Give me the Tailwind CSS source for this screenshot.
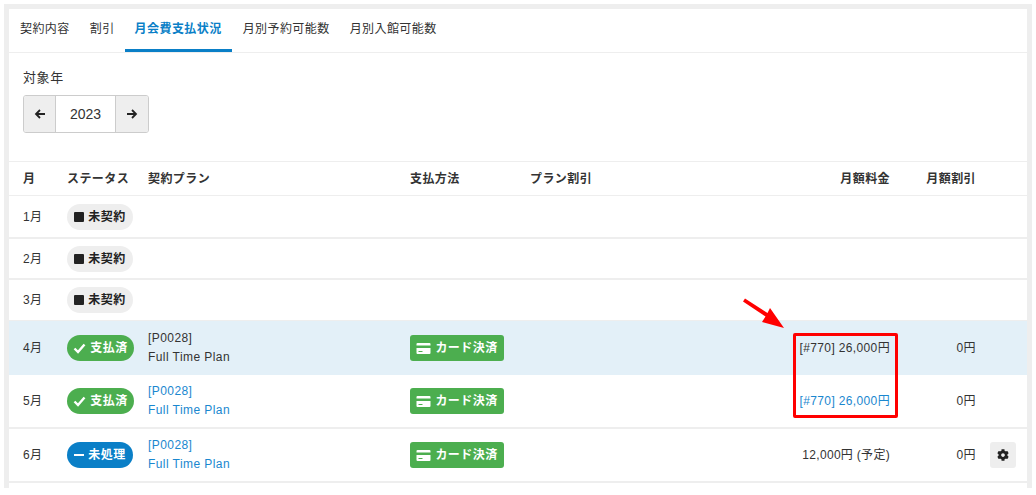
<!DOCTYPE html>
<html lang="ja">
<head>
<meta charset="utf-8">
<script src="https://cdn.jsdelivr.net/npm/@tailwindcss/browser@4"></script>
</head>
<body class="bg-white font-['Liberation_Sans','Noto_Sans_CJK_JP',sans-serif] text-[12px] tracking-[0.43px] text-[#333]">
<div class="relative w-[1036px] h-[495px] overflow-hidden bg-white pt-[4px] pl-[4px]">
  <div class="w-[1028px] h-[484px] overflow-hidden border-[5px] border-b-0 border-[#eeeeee] bg-white">
    <nav class="flex h-[44px] border-b border-[#eeeeee] pl-[1px]">
      <a class="flex h-[43px] items-center px-[10px] pb-[3px]">契約内容</a>
      <a class="flex h-[43px] items-center px-[10px] pb-[3px]">割引</a>
      <a class="flex h-[43px] items-center border-b-[3px] border-[#0a7fc7] px-[10px] font-bold text-[#0a7fc7]">月会費支払状況</a>
      <a class="flex h-[43px] items-center pl-[11px] pr-[10px] pb-[3px]">月別予約可能数</a>
      <a class="flex h-[43px] items-center px-[10px] pb-[3px]">月別入館可能数</a>
    </nav>
    <section class="h-[108px] pl-[14px] pt-[16px]">
      <div class="text-[13px] leading-[18px] tracking-[0.6px]">対象年</div>
      <div class="mt-[8px] flex h-[38px] w-[126px] overflow-hidden rounded-[3px] border border-[#cccccc]">
        <button class="flex w-[31px] items-center justify-center bg-[#eeeeee]">
          <svg width="12" height="12" viewBox="0 0 12 12" fill="none" stroke="#222" stroke-width="1.8"><path d="M11 6H2M6 2 2 6l4 4"/></svg>
        </button>
        <div class="flex w-[61px] items-center justify-center border-x border-[#cccccc] text-[14px] tracking-normal">2023</div>
        <button class="flex w-[32px] items-center justify-center bg-[#eeeeee]">
          <svg width="12" height="12" viewBox="0 0 12 12" fill="none" stroke="#222" stroke-width="1.8"><path d="M1 6h9M6 2l4 4-4 4"/></svg>
        </button>
      </div>
    </section>
    <div class="w-full">
      <div class="grid h-[35px] grid-cols-[58px_81px_262px_120px_250px_110px_86px_1fr] items-center border-y border-[#eeeeee] font-bold">
        <div class="pl-[14px]">月</div><div>ステータス</div><div>契約プラン</div><div>支払方法</div><div>プラン割引</div>
        <div class="text-right">月額料金</div><div class="text-right">月額割引</div><div></div>
      </div>
      <div class="grid h-[43px] grid-cols-[58px_81px_262px_120px_250px_110px_86px_1fr] items-center border-b-2 border-[#eeeeee]">
        <div class="pl-[14px]">1月</div>
        <div><span class="inline-flex h-[26px] w-[66px] items-center justify-center gap-[4px] rounded-full bg-[#eeeeee] font-bold text-[#222]"><i class="size-[10px] rounded-[1px] bg-[#222]"></i>未契約</span></div>
      </div>
      <div class="grid h-[41px] grid-cols-[58px_81px_262px_120px_250px_110px_86px_1fr] items-center border-b-2 border-[#eeeeee]">
        <div class="pl-[14px]">2月</div>
        <div><span class="inline-flex h-[26px] w-[66px] items-center justify-center gap-[4px] rounded-full bg-[#eeeeee] font-bold text-[#222]"><i class="size-[10px] rounded-[1px] bg-[#222]"></i>未契約</span></div>
      </div>
      <div class="grid h-[41px] grid-cols-[58px_81px_262px_120px_250px_110px_86px_1fr] items-center border-b border-[#eeeeee]">
        <div class="pl-[14px]">3月</div>
        <div><span class="inline-flex h-[26px] w-[66px] items-center justify-center gap-[4px] rounded-full bg-[#eeeeee] font-bold text-[#222]"><i class="size-[10px] rounded-[1px] bg-[#222]"></i>未契約</span></div>
      </div>
      <div class="grid h-[54px] grid-cols-[58px_81px_262px_120px_250px_110px_86px_1fr] items-center bg-[#e3f0f8]">
        <div class="pl-[14px]">4月</div>
        <div><span class="inline-flex h-[26px] w-[67px] items-center justify-center gap-[4px] rounded-full bg-[#4cae4f] font-bold text-white"><svg width="13" height="11" viewBox="0 0 13 11" fill="none" stroke="#fff" stroke-width="2.4"><path d="M1.500 5.500 5 9l6.500-7.500"/></svg>支払済</span></div>
        <div class="leading-[19px]">[P0028]<br>Full Time Plan</div>
        <div><span class="inline-flex h-[26px] w-[94px] items-center justify-center gap-[4px] rounded-[3px] bg-[#4cae4f] font-bold text-white"><svg width="15" height="11" viewBox="0 0 14 11" fill="#fff"><path d="M1 0h12a1 1 0 0 1 1 1v1.500H0V1a1 1 0 0 1 1-1ZM0 5h14v5a1 1 0 0 1-1 1H1a1 1 0 0 1-1-1Zm2 3v1h4V8Z"/></svg>カード決済</span></div>
        <div></div>
        <div class="text-right tracking-[0.36px]">[#770] 26,000円</div><div class="text-right">0円</div>
      </div>
      <div class="grid h-[54px] grid-cols-[58px_81px_262px_120px_250px_110px_86px_1fr] items-center border-b-2 border-[#eeeeee]">
        <div class="pl-[14px]">5月</div>
        <div><span class="inline-flex h-[26px] w-[67px] items-center justify-center gap-[4px] rounded-full bg-[#4cae4f] font-bold text-white"><svg width="13" height="11" viewBox="0 0 13 11" fill="none" stroke="#fff" stroke-width="2.4"><path d="M1.500 5.500 5 9l6.500-7.500"/></svg>支払済</span></div>
        <div class="leading-[19px] text-[#1a87cf]">[P0028]<br>Full Time Plan</div>
        <div><span class="inline-flex h-[26px] w-[94px] items-center justify-center gap-[4px] rounded-[3px] bg-[#4cae4f] font-bold text-white"><svg width="15" height="11" viewBox="0 0 14 11" fill="#fff"><path d="M1 0h12a1 1 0 0 1 1 1v1.500H0V1a1 1 0 0 1 1-1ZM0 5h14v5a1 1 0 0 1-1 1H1a1 1 0 0 1-1-1Zm2 3v1h4V8Z"/></svg>カード決済</span></div>
        <div></div>
        <div class="text-right tracking-[0.36px] text-[#1a87cf]">[#770] 26,000円</div><div class="text-right">0円</div>
      </div>
      <div class="grid h-[54px] grid-cols-[58px_81px_262px_120px_250px_110px_86px_1fr] items-center border-b-2 border-[#eeeeee]">
        <div class="pl-[14px]">6月</div>
        <div><span class="inline-flex h-[26px] w-[66px] items-center justify-center gap-[4px] rounded-full bg-[#0a7fc7] font-bold text-white"><i class="h-[2px] w-[10px] bg-white"></i>未処理</span></div>
        <div class="leading-[19px] text-[#1a87cf]">[P0028]<br>Full Time Plan</div>
        <div><span class="inline-flex h-[26px] w-[94px] items-center justify-center gap-[4px] rounded-[3px] bg-[#4cae4f] font-bold text-white"><svg width="15" height="11" viewBox="0 0 14 11" fill="#fff"><path d="M1 0h12a1 1 0 0 1 1 1v1.500H0V1a1 1 0 0 1 1-1ZM0 5h14v5a1 1 0 0 1-1 1H1a1 1 0 0 1-1-1Zm2 3v1h4V8Z"/></svg>カード決済</span></div>
        <div></div>
        <div class="text-right tracking-[0.3px]">12,000円 (予定)</div><div class="text-right">0円</div>
        <div class="pl-[14px]"><button class="flex size-[26px] items-center justify-center rounded-[3px] bg-[#eeeeee]">
          <svg width="12" height="12" viewBox="0 0 512 512"><path fill="#222" d="M487.4 315.7l-42.6-24.6c4.3-23.2 4.3-47 0-70.2l42.6-24.6c4.9-2.8 7.1-8.600 5.500-14-11.100-35.600-30-67.800-54.700-94.600-3.800-4.100-10-5.100-14.800-2.300L380.800 110c-17.900-15.400-38.500-27.300-60.800-35.100V25.800c0-5.600-3.900-10.500-9.400-11.700-36.700-8.200-74.300-7.800-109.200 0-5.500 1.200-9.400 6.100-9.400 11.700V75c-22.200 7.900-42.800 19.800-60.800 35.100L88.700 85.500c-4.900-2.800-11-1.900-14.800 2.300-24.700 26.700-43.600 58.900-54.700 94.600-1.700 5.400.6 11.200 5.500 14L67.300 221c-4.300 23.200-4.300 47 0 70.200l-42.600 24.600c-4.900 2.800-7.100 8.600-5.500 14 11.100 35.600 30 67.800 54.700 94.600 3.800 4.100 10 5.100 14.800 2.300l42.600-24.600c17.900 15.400 38.500 27.300 60.800 35.100v49.200c0 5.600 3.900 10.500 9.400 11.700 36.700 8.200 74.300 7.800 109.200 0 5.500-1.200 9.400-6.100 9.400-11.700v-49.200c22.200-7.900 42.800-19.800 60.800-35.100l42.600 24.600c4.900 2.800 11 1.900 14.800-2.300 24.700-26.700 43.600-58.900 54.700-94.600 1.500-5.500-.7-11.300-5.600-14.100zM256 336c-44.100 0-80-35.900-80-80s35.900-80 80-80 80 35.900 80 80-35.900 80-80 80z"/></svg>
        </button></div>
      </div>
    </div>
  </div>
  <div class="absolute left-[793px] top-[333px] h-[85px] w-[105px] rounded-[2px] border-[3px] border-[#ff0000]"></div>
  <svg class="absolute left-[742px] top-[298px]" width="46" height="32" viewBox="0 0 46 32"><path fill="#ff0000" d="M1 3.500 3 .5 25.500 15 28 10 42 30 20 24 23.500 18.500Z"/></svg>
</div>
</body>
</html>
